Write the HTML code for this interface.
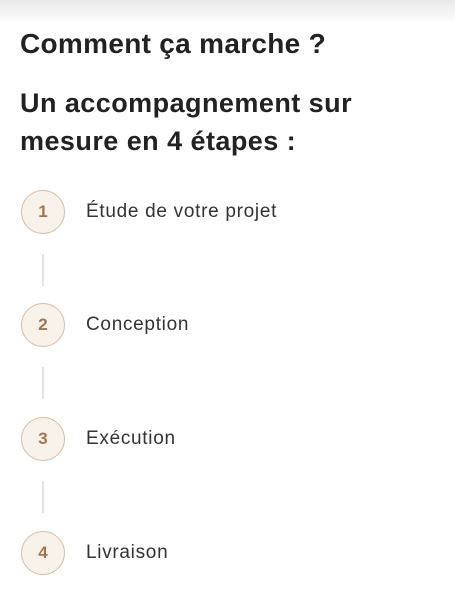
<!DOCTYPE html>
<html><head><meta charset="utf-8"><style>
body{margin:0;width:455px;height:600px;background:#fff;font-family:"Liberation Sans",sans-serif;position:relative;overflow:hidden}
.top{position:absolute;left:0;top:0;width:455px;height:22px;background:linear-gradient(#e9e9e9,#f7f7f7 70%,#fff)}
h1{position:absolute;left:20px;top:27px;margin:0;font-size:28px;font-weight:bold;color:#222;line-height:34px;letter-spacing:0.3px}
h2{position:absolute;left:20px;top:84px;margin:0;font-size:27px;font-weight:bold;color:#222;line-height:38px;letter-spacing:0.45px}
.c{position:absolute;left:21px;width:42px;height:42px;border:1.5px solid #d6bda3;border-radius:50%;background:#f9f2ea;color:#a0764f;font-weight:bold;font-size:17px;text-align:center;line-height:42px}
.t{position:absolute;left:86px;font-size:19px;color:#333;line-height:22px;letter-spacing:0.7px}
.l{position:absolute;left:42px;width:1.5px;height:32px;background:#e2e2e2}
</style></head><body>
<div class="top"></div>
<h1>Comment ça marche ?</h1>
<h2>Un accompagnement sur<br>mesure en 4 étapes :</h2>
<div class="c" style="top:190px">1</div><div class="t" style="top:201px">Étude de votre projet</div>
<div class="l" style="top:254px"></div>
<div class="c" style="top:303px">2</div><div class="t" style="top:314px">Conception</div>
<div class="l" style="top:367px"></div>
<div class="c" style="top:417px">3</div><div class="t" style="top:428px">Exécution</div>
<div class="l" style="top:481px"></div>
<div class="c" style="top:531px">4</div><div class="t" style="top:542px">Livraison</div>
</body></html>
